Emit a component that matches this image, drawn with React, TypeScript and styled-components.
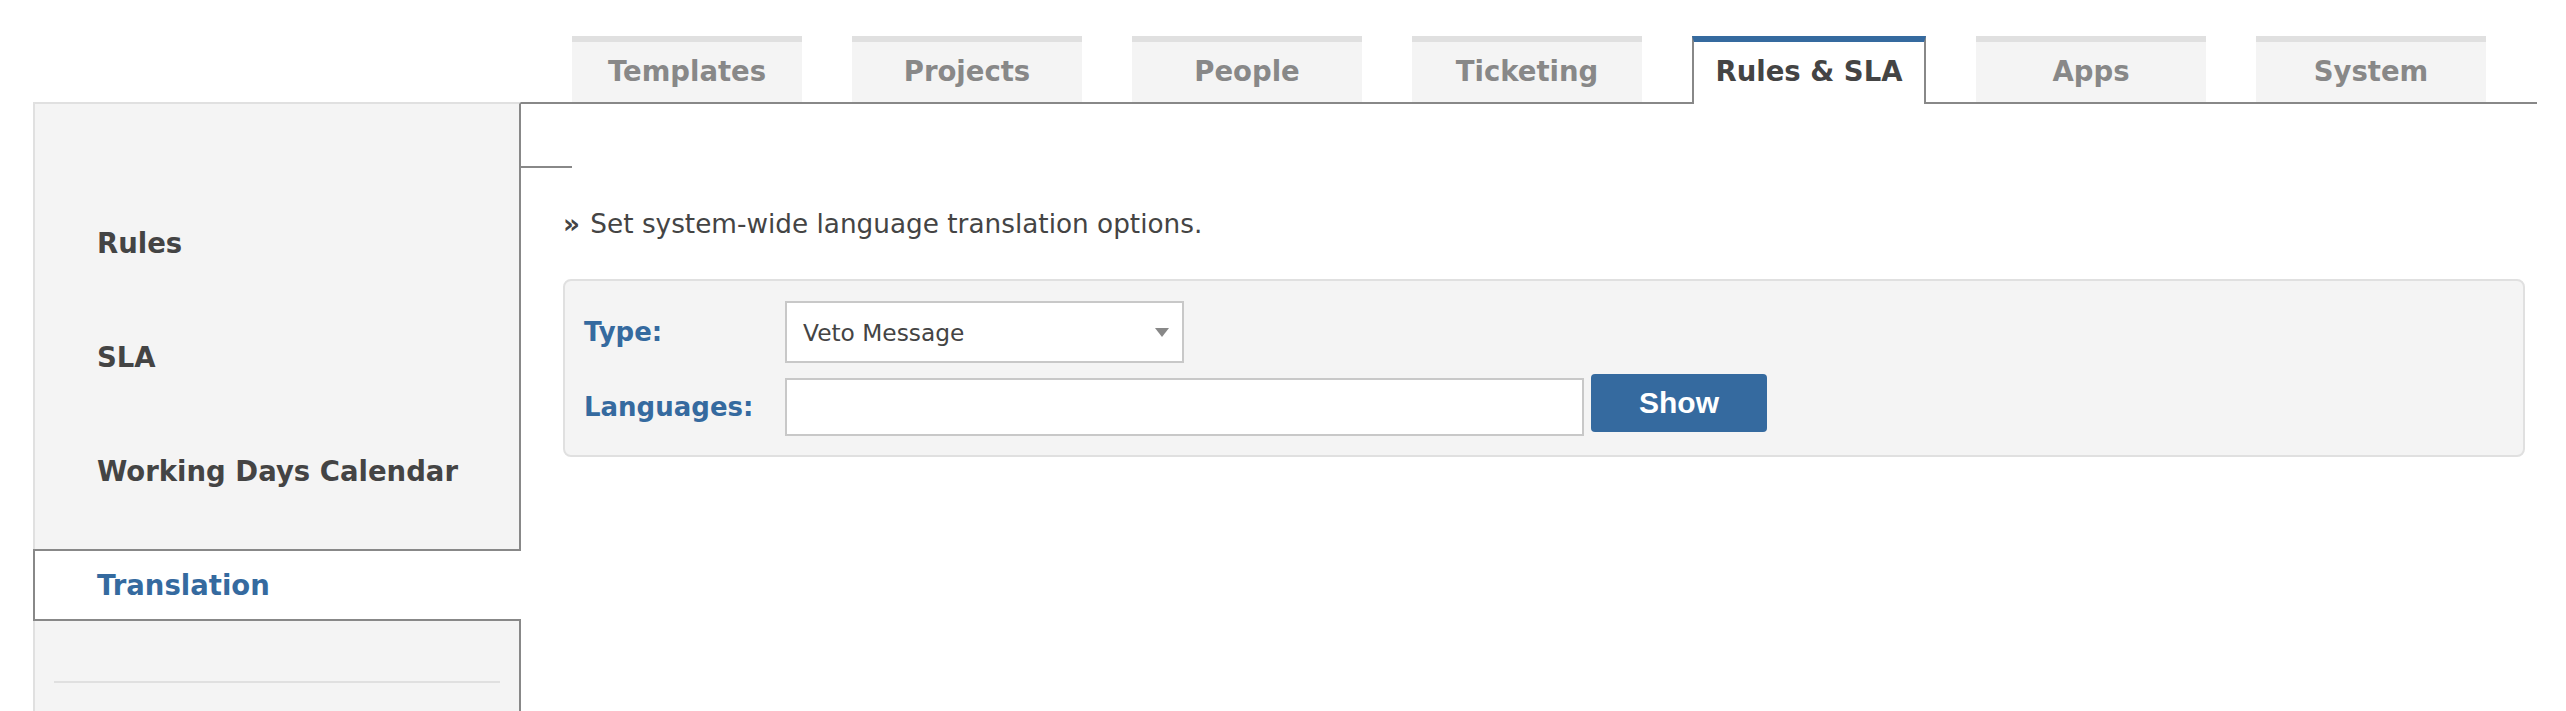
import React from 'react';
import styled, { createGlobalStyle } from 'styled-components';

const GlobalStyle = createGlobalStyle`
  html, body, #root {
    margin: 0;
    height: 100%;
  }
  body {
    background: #ffffff;
    font-family: "DejaVu Sans", Verdana, sans-serif;
    color: #444444;
    overflow: hidden;
  }
`

const BLUE = '#356a9f';
const DARK_LINE = '#888888';
const LIGHT_LINE = '#e0e0e0';

const Page = styled.div`
  display: flex;
  flex-direction: column;
  min-height: 100vh;
`

const TabStrip = styled.div`
  display: flex;
  align-items: flex-end;
  gap: 50px;
  box-sizing: border-box;
  height: 104px;
  width: 2016px;
  margin-left: 521px;
  padding: 36px 0 0 51px;
  border-bottom: 2px solid ${DARK_LINE};
`

const Tab = styled.div<{ $active?: boolean }>`
  display: flex;
  align-items: center;
  justify-content: center;
  box-sizing: border-box;
  width: ${({ $active }) => ($active ? '234px' : '230px')};
  height: ${({ $active }) => ($active ? '68px' : '66px')};
  margin-bottom: ${({ $active }) => ($active ? '-2px' : '0')};
  padding-bottom: ${({ $active }) => ($active ? '5px' : '3px')};
  background: ${({ $active }) => ($active ? '#ffffff' : '#f4f4f4')};
  border-top: 6px solid ${({ $active }) => ($active ? BLUE : LIGHT_LINE)};
  border-left: ${({ $active }) => ($active ? `2px solid ${DARK_LINE}` : 'none')};
  border-right: ${({ $active }) => ($active ? `2px solid ${DARK_LINE}` : 'none')};
  color: ${({ $active }) => ($active ? '#444444' : '#888888')};
  font-size: 27.5px;
  font-weight: bold;
  cursor: pointer;
`

const Body = styled.div`
  display: flex;
  flex: 1;
`

const Sidebar = styled.nav`
  box-sizing: border-box;
  width: 488px;
  margin: -2px 0 0 33px;
  padding-top: 61px;
  background: #f4f4f4;
  border-top: 2px solid ${LIGHT_LINE};
  border-left: 2px solid ${LIGHT_LINE};
  border-right: 2px solid ${DARK_LINE};
`

const NavItem = styled.div<{ $active?: boolean }>`
  display: flex;
  align-items: center;
  box-sizing: border-box;
  height: 72px;
  margin-top: 42px;
  padding-left: 62px;
  margin-left: ${({ $active }) => ($active ? '-2px' : '0')};
  margin-right: ${({ $active }) => ($active ? '-2px' : '0')};
  background: ${({ $active }) => ($active ? '#ffffff' : 'transparent')};
  border: ${({ $active }) => ($active ? `2px solid ${DARK_LINE}` : 'none')};
  border-right: none;
  color: ${({ $active }) => ($active ? BLUE : '#444444')};
  font-size: 27.5px;
  font-weight: bold;
  cursor: pointer;
`

const NavSeparator = styled.hr`
  height: 2px;
  margin: 60px 19px 0;
  border: none;
  background: ${LIGHT_LINE};
`

const Content = styled.main`
  flex: 1;
  padding: 0 41px 0 42px;
`

const Notch = styled.div`
  width: 51px;
  height: 2px;
  margin: 62px 0 0 -42px;
  background: ${DARK_LINE};
`

const Intro = styled.p`
  margin: 41px 0 0;
  font-size: 26.3px;
  line-height: 30px;
  color: #444444;

  b {
    margin-right: 2px;
  }
`

const FormPanel = styled.div`
  display: flex;
  flex-direction: column;
  gap: 15px;
  margin-top: 40px;
  padding: 20px 19px 19px;
  background: #f4f4f4;
  border: 2px solid ${LIGHT_LINE};
  border-radius: 8px;
`

const FormRow = styled.div`
  display: flex;
  align-items: center;
`

const FieldLabel = styled.label`
  width: 201px;
  color: ${BLUE};
  font-size: 26px;
  font-weight: bold;
`

const SelectBox = styled.div`
  display: flex;
  align-items: center;
  justify-content: space-between;
  box-sizing: border-box;
  width: 399px;
  height: 62px;
  padding: 0 13px 0 16px;
  background: #ffffff;
  border: 2px solid #c8c8c8;
  font-size: 23.3px;
  color: #444444;
`

const Caret = styled.span`
  width: 0;
  height: 0;
  border-left: 7px solid transparent;
  border-right: 7px solid transparent;
  border-top: 9px solid #888888;
`

const TextInput = styled.input`
  box-sizing: border-box;
  width: 799px;
  height: 58px;
  margin: 0;
  background: #ffffff;
  border: 2px solid #c8c8c8;
  font-size: 23px;
  font-family: "DejaVu Sans", sans-serif;
  outline: none;
`

const ShowButton = styled.button`
  width: 176px;
  height: 58px;
  margin: -8px 0 0 7px;
  background: ${BLUE};
  border: none;
  border-radius: 4px;
  color: #ffffff;
  font-family: "Liberation Sans", Arial, sans-serif;
  font-size: 30px;
  font-weight: bold;
  cursor: pointer;
`

const tabs = ['Templates', 'Projects', 'People', 'Ticketing', 'Rules & SLA', 'Apps', 'System'];
const navItems = ['Rules', 'SLA', 'Working Days Calendar', 'Translation'];

export default function App() {
  const activeTab = 'Rules & SLA';
  const activeNav = 'Translation';

  return (
    <Page>
      <GlobalStyle />
      <TabStrip>
        {tabs.map((t) => (
          <Tab key={t} $active={t === activeTab}>{t}</Tab>
        ))}
      </TabStrip>
      <Body>
        <Sidebar>
          {navItems.map((n) => (
            <NavItem key={n} $active={n === activeNav}>{n}</NavItem>
          ))}
          <NavSeparator />
        </Sidebar>
        <Content>
          <Notch />
          <Intro><b>»</b> Set system-wide language translation options.</Intro>
          <FormPanel>
            <FormRow>
              <FieldLabel>Type:</FieldLabel>
              <SelectBox>
                <span>Veto Message</span>
                <Caret />
              </SelectBox>
            </FormRow>
            <FormRow>
              <FieldLabel>Languages:</FieldLabel>
              <TextInput type="text" />
              <ShowButton>Show</ShowButton>
            </FormRow>
          </FormPanel>
        </Content>
      </Body>
    </Page>
  );
}
